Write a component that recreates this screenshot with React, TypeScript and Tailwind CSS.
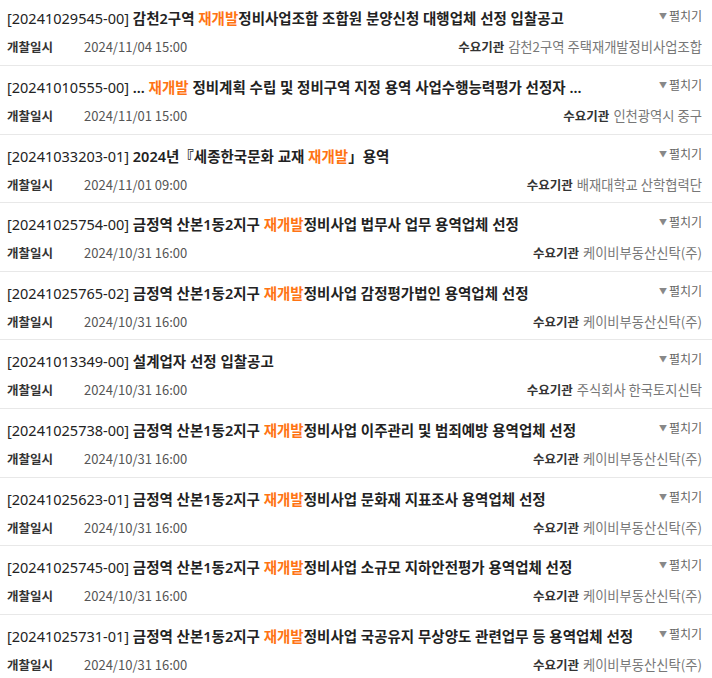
import React from 'react';

type Bid = {
  id: string;
  pre: string;
  hl?: string;
  post: string;
  date: string;
  org: string;
};

const bids: Bid[] = [
  { id: '20241029545-00', pre: '감천2구역 ', hl: '재개발', post: '정비사업조합 조합원 분양신청 대행업체 선정 입찰공고', date: '2024/11/04 15:00', org: '감천2구역 주택재개발정비사업조합' },
  { id: '20241010555-00', pre: '... ', hl: '재개발', post: ' 정비계획 수립 및 정비구역 지정 용역 사업수행능력평가 선정자 ...', date: '2024/11/01 15:00', org: '인천광역시 중구' },
  { id: '20241033203-01', pre: '2024년『세종한국문화 교재 ', hl: '재개발', post: '」용역', date: '2024/11/01 09:00', org: '배재대학교 산학협력단' },
  { id: '20241025754-00', pre: '금정역 산본1동2지구 ', hl: '재개발', post: '정비사업 법무사 업무 용역업체 선정', date: '2024/10/31 16:00', org: '케이비부동산신탁(주)' },
  { id: '20241025765-02', pre: '금정역 산본1동2지구 ', hl: '재개발', post: '정비사업 감정평가법인 용역업체 선정', date: '2024/10/31 16:00', org: '케이비부동산신탁(주)' },
  { id: '20241013349-00', pre: '설계업자 선정 입찰공고', post: '', date: '2024/10/31 16:00', org: '주식회사 한국토지신탁' },
  { id: '20241025738-00', pre: '금정역 산본1동2지구 ', hl: '재개발', post: '정비사업 이주관리 및 범죄예방 용역업체 선정', date: '2024/10/31 16:00', org: '케이비부동산신탁(주)' },
  { id: '20241025623-01', pre: '금정역 산본1동2지구 ', hl: '재개발', post: '정비사업 문화재 지표조사 용역업체 선정', date: '2024/10/31 16:00', org: '케이비부동산신탁(주)' },
  { id: '20241025745-00', pre: '금정역 산본1동2지구 ', hl: '재개발', post: '정비사업 소규모 지하안전평가 용역업체 선정', date: '2024/10/31 16:00', org: '케이비부동산신탁(주)' },
  { id: '20241025731-01', pre: '금정역 산본1동2지구 ', hl: '재개발', post: '정비사업 국공유지 무상양도 관련업무 등 용역업체 선정', date: '2024/10/31 16:00', org: '케이비부동산신탁(주)' },
];

function BidRow({ bid }: { bid: Bid }) {
  return (
    <div className="h-[68.6px] border-b border-[#e8e8e8] pl-[7px] pr-[10px] flex flex-col">
      <div className="flex items-start justify-between pt-[10px]">
        <div className="font-['Noto_Sans','Noto_Sans_CJK_KR',sans-serif] text-[14.5px] leading-[22px] text-[#222] whitespace-nowrap">
          <span>[{bid.id}] </span>
          <span className="font-semibold">{bid.pre}</span>
          {bid.hl && <span className="font-semibold text-[#ff7414]">{bid.hl}</span>}
          <span className="font-semibold">{bid.post}</span>
        </div>
        <div className="flex items-center gap-[2px] text-[12px] leading-[16px] text-[#666] whitespace-nowrap pt-[1px]">
          <span className="text-[8px] text-[#888]">▼</span>
          <span>펼치기</span>
        </div>
      </div>
      <div className="flex items-center justify-between mt-[9px] text-[13.3px] leading-[18px]">
        <div className="flex items-center">
          <span className="w-[77px] text-[12.5px] font-semibold text-[#333]">개찰일시</span>
          <span className="text-[13px] text-[#555]">{bid.date}</span>
        </div>
        <div className="flex items-center gap-[4px]">
          <span className="text-[12.5px] font-semibold text-[#333]">수요기관</span>
          <span className="text-[#777]">{bid.org}</span>
        </div>
      </div>
    </div>
  );
}

export default function App() {
  return (
    <div className="w-[712px] h-[678px] overflow-hidden bg-white font-['Noto_Sans_CJK_KR',sans-serif]">
      <div className="-mt-[2.6px]">
        {bids.map((b) => (
          <BidRow key={b.id} bid={b} />
        ))}
      </div>
    </div>
  );
}
